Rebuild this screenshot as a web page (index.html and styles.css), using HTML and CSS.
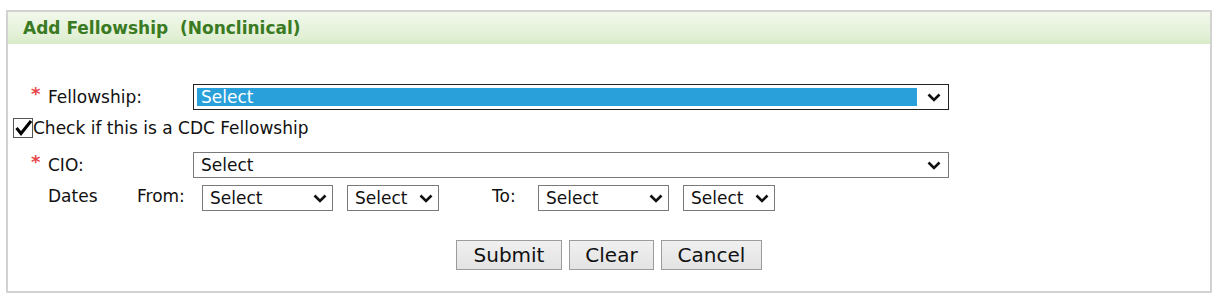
FILE: index.html
```html
<!DOCTYPE html>
<html lang="en">
<head>
<meta charset="UTF-8" />
<title>Add Fellowship</title>
<link rel="stylesheet" href="styles.css">
</head>
<body>
  <section class="panel">
    <h2 class="panel-head">Add Fellowship&nbsp; (Nonclinical)</h2>

    <form class="panel-body">
      <div class="field row-fellowship">
        <span class="req">*</span>
        <label class="field-label" for="fellowship">Fellowship:</label>
        <span class="select select-wide is-focused">
          <select id="fellowship"><option>Select</option></select>
          <svg class="chev" width="14" height="9" viewBox="0 0 14 9"><path d="M1.5 1.5 L7 7 L12.5 1.5" fill="none" stroke="#111" stroke-width="2.6"/></svg>
        </span>
      </div>

      <label class="check-row">
        <input type="checkbox" class="sr-only" checked>
        <span class="check-box"><svg width="18" height="18" viewBox="0 0 18 18"><path d="M2.5 9 L7 14.5 L17 2" fill="none" stroke="#000" stroke-width="3"/></svg></span>
        Check if this is a CDC Fellowship
      </label>

      <div class="field row-cio">
        <span class="req">*</span>
        <label class="field-label" for="cio">CIO:</label>
        <span class="select select-wide">
          <select id="cio"><option>Select</option></select>
          <svg class="chev" width="14" height="9" viewBox="0 0 14 9"><path d="M1.5 1.5 L7 7 L12.5 1.5" fill="none" stroke="#111" stroke-width="2.6"/></svg>
        </span>
      </div>

      <div class="field row-dates">
        <span class="req"></span>
        <span class="dates-label">Dates</span>
        <span class="date-label">From:</span>
        <span class="select select-month">
          <select aria-label="From month"><option>Select</option></select>
          <svg class="chev" width="14" height="9" viewBox="0 0 14 9"><path d="M1.5 1.5 L7 7 L12.5 1.5" fill="none" stroke="#111" stroke-width="2.6"/></svg>
        </span>
        <span class="select select-year">
          <select aria-label="From year"><option>Select</option></select>
          <svg class="chev" width="14" height="9" viewBox="0 0 14 9"><path d="M1.5 1.5 L7 7 L12.5 1.5" fill="none" stroke="#111" stroke-width="2.6"/></svg>
        </span>
        <span class="date-label label-to">To:</span>
        <span class="select select-month">
          <select aria-label="To month"><option>Select</option></select>
          <svg class="chev" width="14" height="9" viewBox="0 0 14 9"><path d="M1.5 1.5 L7 7 L12.5 1.5" fill="none" stroke="#111" stroke-width="2.6"/></svg>
        </span>
        <span class="select select-year">
          <select aria-label="To year"><option>Select</option></select>
          <svg class="chev" width="14" height="9" viewBox="0 0 14 9"><path d="M1.5 1.5 L7 7 L12.5 1.5" fill="none" stroke="#111" stroke-width="2.6"/></svg>
        </span>
      </div>

      <div class="actions">
        <button type="submit" class="btn btn-submit">Submit</button>
        <button type="reset" class="btn btn-clear">Clear</button>
        <button type="button" class="btn btn-cancel">Cancel</button>
      </div>
    </form>
  </section>
</body>
</html>
```

FILE: styles.css
```css
/* Temel */
*,
*::before,
*::after {
  box-sizing: border-box;
}

body {
  margin: 0;
  font-family: 'DejaVu Sans', Verdana, sans-serif;
  color: #111;
  background: #fff;
}

.sr-only {
  position: absolute !important;
  width: 1px !important;
  height: 1px !important;
  margin: -1px !important;
  overflow: hidden !important;
  clip: rect(0, 0, 0, 0) !important;
  border: 0 !important;
}

/* Panel */
.panel {
  width: 1206px;
  height: 283px;
  margin: 10px 0 0 6px;
  border: 2px solid #d2d2d2;
}

.panel-head {
  margin: 0;
  height: 32px;
  padding-left: 15px;
  line-height: 32px;
  font-size: 17px;
  font-weight: bold;
  color: #3a7a22;
  background: linear-gradient(#f1f8eb, #e2f0d6 75%, #d8ebc8);
}

.panel-body {
  padding: 40px 0 0 5px;
}

/* Satırlar */
.field {
  display: flex;
  align-items: center;
  height: 26px;
  padding-left: 18px;
  font-size: 17px;
}

.req {
  width: 17px;
  align-self: flex-start;
  margin-top: 2px;
  color: #e8474a;
  font-size: 18px;
  font-weight: bold;
  line-height: 16px;
}

.field-label {
  width: 145px;
}

.row-cio {
  margin-top: 14px;
}

.row-dates {
  margin-top: 7px;
}

.dates-label {
  width: 89px;
  margin-top: -4px;
}

.date-label {
  width: 65px;
  margin-top: -4px;
}

.label-to {
  width: 46px;
  margin-left: 53px;
}

/* Checkbox */
.check-row {
  display: flex;
  align-items: center;
  height: 20px;
  margin-top: 8px;
  font-size: 17px;
}

.check-box {
  display: inline-flex;
  width: 20px;
  height: 20px;
  margin-top: -1px;
  border: 1px solid #555;
  background: #fff;
}

/* Select kutuları */
.select {
  position: relative;
  display: inline-block;
  height: 26px;
}

.select select {
  appearance: none;
  -webkit-appearance: none;
  width: 100%;
  height: 100%;
  margin: 0;
  padding: 0 0 0 7px;
  border: 1px solid #7a7a7a;
  border-radius: 0;
  background: #fff;
  font-family: inherit;
  font-size: 17px;
  color: #111;
}

.select .chev {
  position: absolute;
  right: 8px;
  top: 9px;
  pointer-events: none;
}

.select-wide {
  width: 756px;
}

.select-wide.is-focused select {
  border-color: #222;
  color: #fff;
  background: linear-gradient(#29a0da, #29a0da) no-repeat 3px 3px / calc(100% - 34px) calc(100% - 6px), #fff;
}

.select-month {
  width: 131px;
}

.select-year {
  width: 92px;
  margin-left: 14px;
}

.select-month .chev,
.select-year .chev {
  right: 6px;
}

/* Butonlar */
.actions {
  display: flex;
  justify-content: center;
  gap: 7px;
  margin-top: 29px;
  padding-right: 5px;
}

.btn {
  height: 30px;
  padding: 0;
  border: 1px solid #9c9c9c;
  background: linear-gradient(#f0f0f0, #e3e3e3);
  font-family: inherit;
  font-size: 20px;
  color: #111;
}

.btn-submit {
  width: 106px;
}

.btn-clear {
  width: 85px;
}

.btn-cancel {
  width: 101px;
}
```
